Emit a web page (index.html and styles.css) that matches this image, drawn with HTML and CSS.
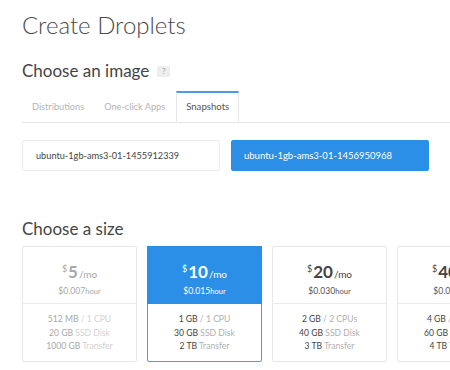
FILE: index.html
```html
<!DOCTYPE html>
<html>
<head>
<meta charset="utf-8">
<link rel="stylesheet" href="styles.css">
</head>
<body>
<div class="page">
  <h1 class="title">Create Droplets</h1>
  <h2 class="section">Choose an image <span class="help">?</span></h2>
  <div class="tabs">
    <div class="tab">Distributions</div>
    <div class="tab">One-click Apps</div>
    <div class="tab active">Snapshots</div>
  </div>
  <div class="images">
    <div class="image">ubuntu-1gb-ams3-01-1455912339</div>
    <div class="image selected">ubuntu-1gb-ams3-01-1456950968</div>
  </div>
  <h2 class="section size-title">Choose a size</h2>
  <div class="cards">
    <div class="card faded">
      <div class="card-top">
        <div class="price"><span class="cur">$</span><span class="amt">5</span><span class="per">/mo</span></div>
        <div class="hourly">$0.007<span class="hr">hour</span></div>
      </div>
      <div class="card-specs">
        <div>512 MB <span class="dim">/ 1 CPU</span></div>
        <div>20 GB <span class="dim">SSD Disk</span></div>
        <div>1000 GB <span class="dim">Transfer</span></div>
      </div>
    </div>
    <div class="card chosen">
      <div class="card-top">
        <div class="price"><span class="cur">$</span><span class="amt">10</span><span class="per">/mo</span></div>
        <div class="hourly">$0.015<span class="hr">hour</span></div>
      </div>
      <div class="card-specs">
        <div>1 GB <span class="dim">/ 1 CPU</span></div>
        <div>30 GB <span class="dim">SSD Disk</span></div>
        <div>2 TB <span class="dim">Transfer</span></div>
      </div>
    </div>
    <div class="card">
      <div class="card-top">
        <div class="price"><span class="cur">$</span><span class="amt">20</span><span class="per">/mo</span></div>
        <div class="hourly">$0.030<span class="hr">hour</span></div>
      </div>
      <div class="card-specs">
        <div>2 GB <span class="dim">/ 2 CPUs</span></div>
        <div>40 GB <span class="dim">SSD Disk</span></div>
        <div>3 TB <span class="dim">Transfer</span></div>
      </div>
    </div>
    <div class="card">
      <div class="card-top">
        <div class="price"><span class="cur">$</span><span class="amt">40</span><span class="per">/mo</span></div>
        <div class="hourly">$0.060<span class="hr">hour</span></div>
      </div>
      <div class="card-specs">
        <div>4 GB <span class="dim">/ 2 CPUs</span></div>
        <div>60 GB <span class="dim">SSD Disk</span></div>
        <div>4 TB <span class="dim">Transfer</span></div>
      </div>
    </div>
  </div>
</div>
</body>
</html>
```
FILE: styles.css
```css
html, body {
  margin: 0;
  padding: 0;
  background: #fff;
  overflow: hidden;
}
body {
  font-family: Lato, "Open Sans", sans-serif;
  color: #444;
}
.page {
  padding: 8px 0 0 22px;
  width: 428px;
}
.title {
  margin: 0;
  font-size: 24px;
  font-weight: 300;
  color: #4a4a4a;
  line-height: 34px;
}
.section {
  margin: 18px 0 0;
  font-size: 17px;
  font-weight: 400;
  color: #444;
  line-height: 22px;
  display: flex;
  align-items: center;
}
.help {
  display: inline-block;
  width: 13px;
  height: 11px;
  margin-left: 8px;
  background: #eee;
  color: #999;
  font-size: 7px;
  line-height: 11px;
  text-align: center;
  border-radius: 1px;
}
.tabs {
  display: flex;
  margin-top: 9px;
  border-bottom: 1px solid #e6e6e6;
  height: 31px;
}
.tab {
  padding: 0 10px;
  font-size: 9.2px;
  color: #b4b4b4;
  line-height: 31px;
}
.tab.active {
  margin-left: 1px;
  color: #555;
  font-size: 9.6px;
  background: #fff;
  border: 1px solid #e6e6e6;
  border-top: 2px solid #4a9be8;
  border-bottom: 1px solid #fff;
  line-height: 28px;
  height: 28px;
  margin-bottom: -1px;
  padding: 0 9px;
}
.images {
  display: flex;
  gap: 11px;
  margin-top: 17px;
}
.image {
  width: 198px;
  height: 31px;
  box-sizing: border-box;
  border: 1px solid #ececec;
  border-radius: 2px;
  font-size: 9.2px;
  line-height: 29px;
  padding-left: 13px;
  color: #444;
}
.image.selected {
  background: #2b8fe8;
  border-color: #2b8fe8;
  color: #fff;
  padding-left: 12px;
  font-size: 9.5px;
}
.size-title {
  margin-top: 47px;
}
.cards {
  display: flex;
  gap: 10px;
  margin-top: 6px;
}
.card {
  flex: 0 0 115px;
  height: 116px;
  box-sizing: border-box;
  border: 1px solid #e8e8e8;
  border-radius: 2px;
  text-align: center;
  display: flex;
  flex-direction: column;
}
.card-top {
  height: 57px;
  border-bottom: 1px solid #eaeaea;
  box-sizing: border-box;
  padding-top: 12px;
}
.price {
  line-height: 20px;
  color: #444;
}
.cur {
  font-size: 9px;
  vertical-align: 6px;
  margin-right: 1px;
}
.amt {
  font-size: 17px;
  font-weight: 700;
}
.per {
  font-size: 10px;
  margin-left: 1px;
}
.hourly {
  margin-top: 2px;
  font-size: 8.6px;
  color: #555;
}
.hr {
  font-size: 7.5px;
}
.card-specs {
  padding-top: 9px;
  font-size: 8.6px;
  line-height: 13.5px;
  color: #444;
}
.dim {
  color: #b0b0b0;
}
.faded .price,
.faded .hourly,
.faded .card-specs {
  color: #a8a8a8;
}
.faded .dim {
  color: #d2d2d2;
}
.chosen {
  border-color: #4a9be8;
}
.chosen .card-top {
  background: #2b8fe8;
  border-bottom: none;
  margin: -1px -1px 0;
  padding-top: 13px;
  height: 58px;
}
.chosen .price,
.chosen .hourly {
  color: #fff;
}
```
